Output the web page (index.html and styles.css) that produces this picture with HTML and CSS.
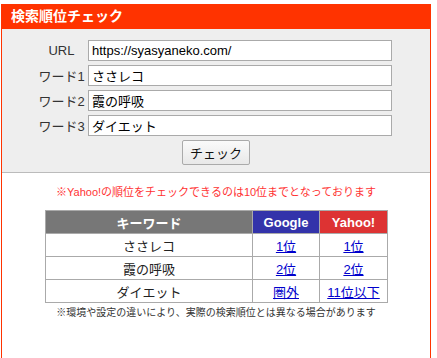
FILE: index.html
```html
<!DOCTYPE html>
<html lang="ja">
<head>
<meta charset="utf-8">
<link rel="stylesheet" href="styles.css">
</head>
<body>
<div class="box">
  <div class="head">検索順位チェック</div>
  <form class="form">
    <div class="row"><label class="lbl">URL</label><input class="inp" type="text" value="https://syasyaneko.com/"></div>
    <div class="row"><label class="lbl">ワード1</label><input class="inp" type="text" value="ささレコ"></div>
    <div class="row"><label class="lbl">ワード2</label><input class="inp" type="text" value="霞の呼吸"></div>
    <div class="row"><label class="lbl">ワード3</label><input class="inp" type="text" value="ダイエット"></div>
    <div class="btnrow"><button class="btn" type="button">チェック</button></div>
  </form>
  <div class="result">
    <p class="notice">※Yahoo!の順位をチェックできるのは10位までとなっております</p>
    <table class="tbl">
      <tr><th class="kw">キーワード</th><th class="gg">Google</th><th class="yh">Yahoo!</th></tr>
      <tr><td>ささレコ</td><td><a href="#">1位</a></td><td><a href="#">1位</a></td></tr>
      <tr><td>霞の呼吸</td><td><a href="#">2位</a></td><td><a href="#">2位</a></td></tr>
      <tr><td>ダイエット</td><td><a href="#">圏外</a></td><td><a href="#">11位以下</a></td></tr>
    </table>
    <p class="note">※環境や設定の違いにより、実際の検索順位とは異なる場合があります</p>
  </div>
</div>
</body>
</html>
```
FILE: styles.css
```css
html, body {
  margin: 0;
  padding: 0;
  background: #fff;
}
body {
  padding: 4px 0 0 1px;
  font-family: "Liberation Sans", "Noto Sans CJK JP", sans-serif;
  color: #222;
}
.box {
  width: 428px;
  height: 354px;
  overflow: hidden;
  border-left: 1px solid #ff3300;
  border-right: 1px solid #ff3300;
}
.head {
  height: 25px;
  line-height: 25px;
  background: #ff3300;
  color: #fff;
  font-weight: bold;
  font-size: 14px;
  padding-left: 9px;
}
.form {
  margin: 0;
  background: #eee;
  border-bottom: 1px solid #bbb;
  padding: 11px 0 8px;
  height: 124px;
}
.row {
  display: flex;
  align-items: center;
  height: 21px;
  margin-bottom: 4px;
}
.lbl {
  width: 47px;
  margin-left: 36px;
  margin-right: 3px;
  text-align: center;
  font-size: 13px;
  color: #333;
}
.inp {
  box-sizing: border-box;
  width: 304px;
  height: 21px;
  border: 1px solid #aaa;
  background: #fff;
  padding: 0 3px;
  font-family: "Liberation Sans", "Noto Sans CJK JP", sans-serif;
  font-size: 13px;
  color: #000;
  margin: 0;
}
.btnrow {
  display: flex;
  justify-content: center;
}
.btn {
  box-sizing: border-box;
  width: 68px;
  height: 25px;
  border: 1px solid #aaa;
  border-radius: 2px;
  background: linear-gradient(#fafafa, #e8e8e8);
  font-family: "Liberation Sans", "Noto Sans CJK JP", sans-serif;
  font-size: 13px;
  color: #111;
  padding: 0;
}
.result {
  display: flex;
  flex-direction: column;
  align-items: center;
}
.notice {
  margin: 11px 0 0;
  height: 16px;
  line-height: 16px;
  font-size: 11px;
  color: #ff3333;
}
.tbl {
  margin-top: 10px;
  border-collapse: collapse;
  font-size: 13px;
  margin-left: 1px;
}
.tbl th, .tbl td {
  border: 1px solid #aaa;
  height: 22px;
  padding: 0;
  text-align: center;
}
.tbl th {
  color: #fff;
  font-weight: bold;
  font-size: 13px;
}
.tbl td {
  color: #222;
}
.kw { width: 206px; background: #777; }
.gg { width: 66px; background: #3333aa; }
.yh { width: 67px; background: #dd3333; }
.tbl a { color: #0000cc; }
.note {
  margin: 3px 0 0;
  font-size: 10px;
  color: #333;
  line-height: 14px;
}
```
